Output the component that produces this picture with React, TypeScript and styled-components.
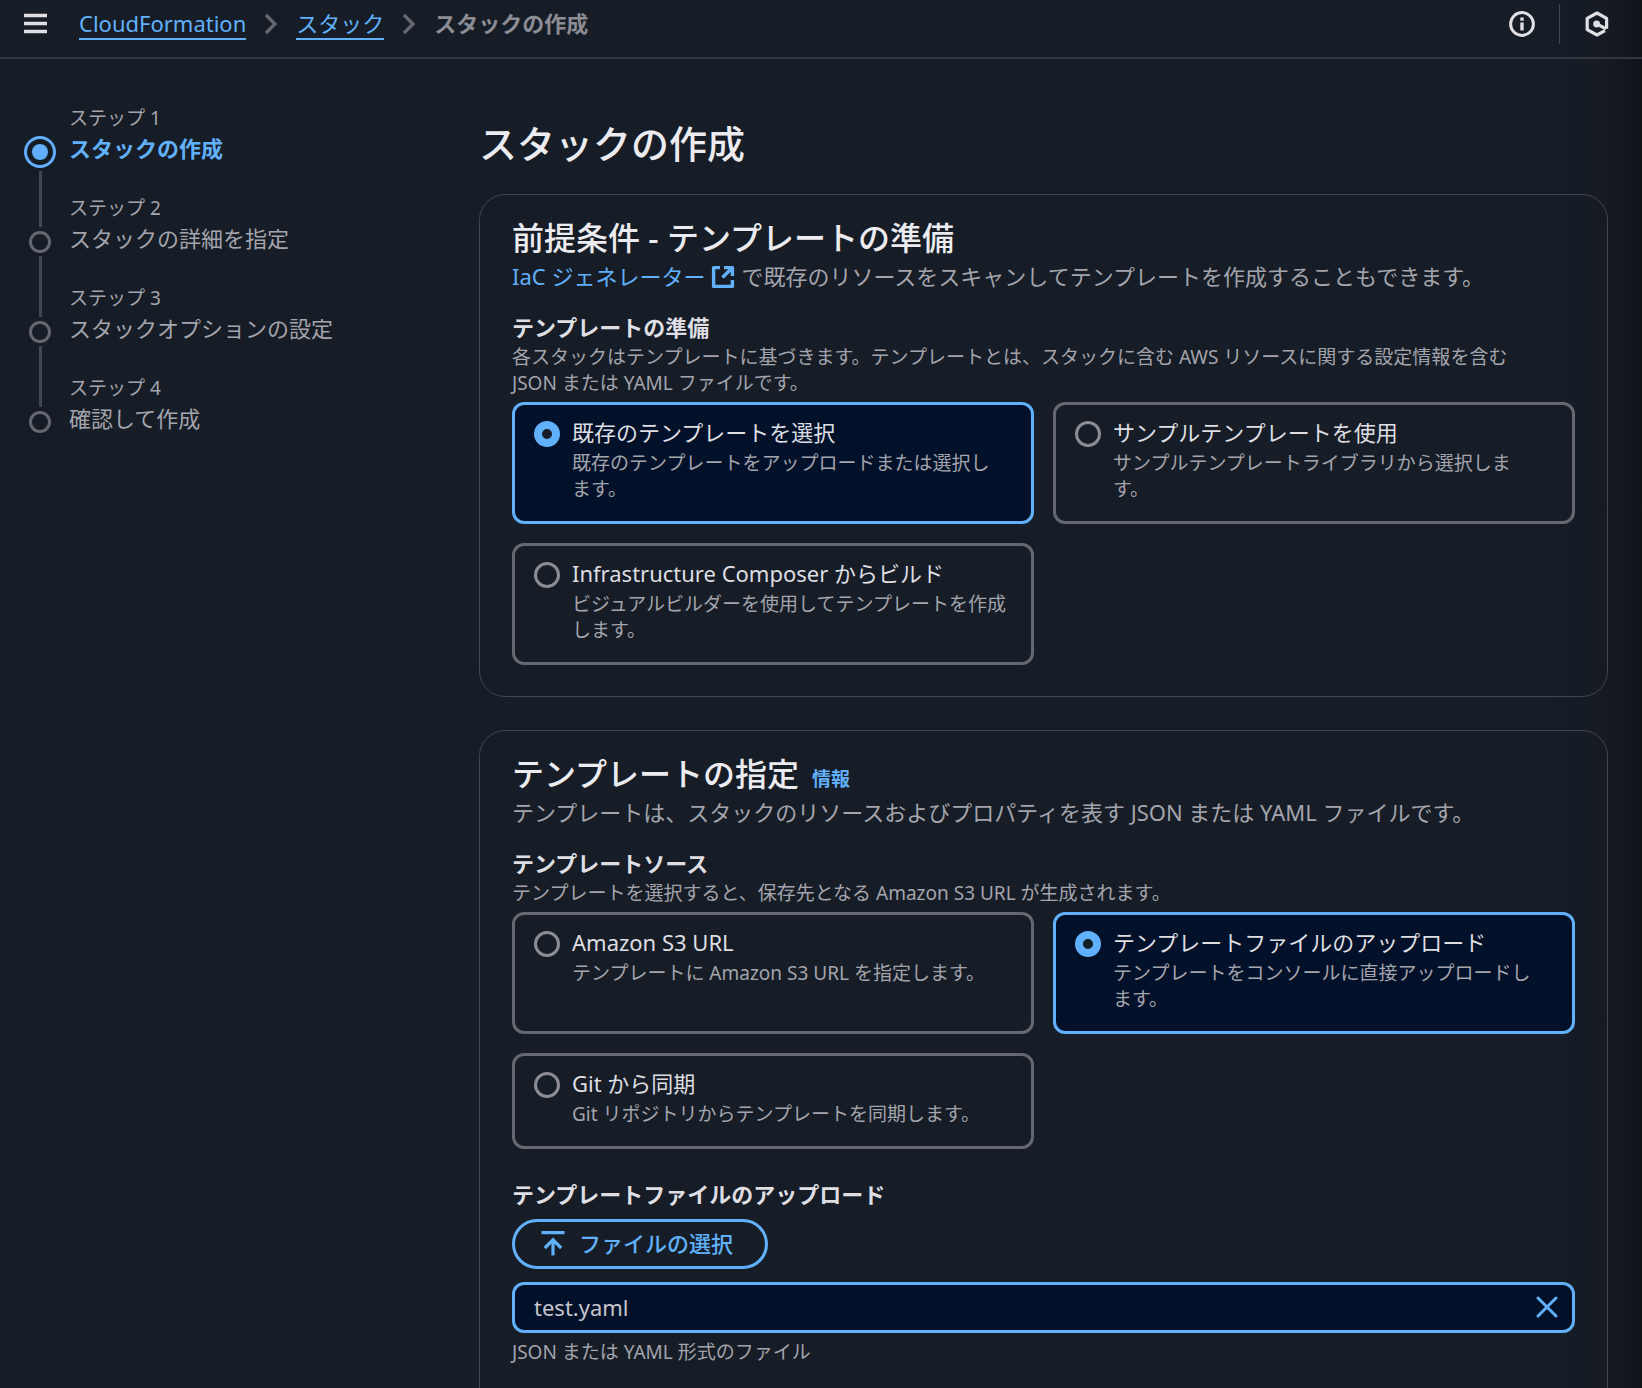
import React, { useState } from 'react';
import styled, { createGlobalStyle, css } from 'styled-components';

const color = {
  page: '#161d26',
  selected: '#001129',
  accent: '#61b0fc',
  heading: '#ebebf0',
  text: '#dedee3',
  muted: '#a4a4ad',
  faint: '#8c8c94',
  line: '#424650',
  control: '#656871',
};

const GlobalStyle = createGlobalStyle`
  *, *::before, *::after { box-sizing: border-box; }
  body {
    margin: 0;
    background: ${color.page};
    color: ${color.muted};
    font-family: 'Noto Sans', 'Noto Sans CJK JP', sans-serif;
    font-size: 22px;
    line-height: 32px;
  }
  button, input { font: inherit; color: inherit; }
  h1, h2, p, ol, fieldset, legend { margin: 0; padding: 0; border: 0; }
`;

const Shell = styled.div`
  height: 100vh;
  display: flex;
  flex-direction: column;
  background: linear-gradient(to left, #0f1217 0, #131820 20px, #161b24 44px, ${color.page} 90px);
`;

const TopBar = styled.header`
  flex: none;
  display: flex;
  align-items: center;
  justify-content: space-between;
  height: 59px;
  padding: 0 32px 10px 22px;
  border-bottom: 2px solid #32363f;
`;

const BarGroup = styled.div<{ $gap: number }>`
  display: flex;
  align-items: center;
  gap: ${(p) => p.$gap}px;
`;

const IconButton = styled.button`
  display: flex;
  padding: 0;
  border: 0;
  background: none;
  color: ${color.text};
  cursor: pointer;
`;

const Divider = styled.span`
  width: 1px;
  height: 40px;
  background: ${color.line};
`;

const Crumbs = styled.ol`
  display: flex;
  align-items: center;
  gap: 17px;
  list-style: none;

  li {
    display: flex;
    align-items: center;
    gap: 17px;
  }
`;

const crumb = css`
  display: block;
  line-height: 30px;
  border-bottom: 2px solid transparent;
`;

const CrumbLink = styled.a`
  ${crumb}
  color: ${color.accent};
  text-decoration: none;
  border-color: ${color.accent};
`;

const CurrentCrumb = styled.span`
  ${crumb}
  color: ${color.faint};
  font-weight: 700;
`;

const Scroller = styled.div`
  flex: 1;
  min-height: 0;
  overflow-y: auto;
  scrollbar-width: none;
  display: flex;
  align-items: flex-start;
`;

const StepNav = styled.nav`
  flex: none;
  width: 479px;
  padding: 47px 24px 0;

  ol { list-style: none; }
`;

const StepItem = styled.li`
  display: flex;
  gap: 13px;
  height: 90px;
`;

const Rail = styled.span`
  flex: none;
  width: 32px;
  display: flex;
  flex-direction: column;
  align-items: center;
`;

const Segment = styled.span<{ $grow?: boolean; $hidden?: boolean }>`
  width: 3px;
  background: ${(p) => (p.$hidden ? 'transparent' : color.line)};
  ${(p) => (p.$grow ? 'flex: 1;' : 'height: 31px;')}
`;

const Marker = styled.span<{ $active?: boolean }>`
  flex: none;
  width: ${(p) => (p.$active ? 32 : 22)}px;
  height: ${(p) => (p.$active ? 32 : 22)}px;
  margin: ${(p) => (p.$active ? '-1px 0 3px' : '4px 0 3px')};
  border: 3px solid ${(p) => (p.$active ? color.accent : color.control)};
  border-radius: 50%;
  ${(p) =>
    p.$active &&
    css`
      padding: 5px;
      background: ${color.accent} content-box;
    `}
`;

const StepText = styled.div<{ $active?: boolean }>`
  display: flex;
  flex-direction: column;
  gap: 2px;
  font-size: 19px;
  line-height: 24px;

  a {
    font-size: 22px;
    line-height: 32px;
    text-decoration: none;
    font-weight: ${(p) => (p.$active ? 700 : 400)};
    color: ${(p) => (p.$active ? color.accent : color.muted)};
  }
`;

const Main = styled.main`
  flex: 1;
  min-width: 0;
  padding: 60px 34px 64px 0;
  display: flex;
  flex-direction: column;
`;

const PageTitle = styled.h1`
  font-size: 38px;
  line-height: 48px;
  font-weight: 500;
  color: ${color.heading};
  margin-bottom: 27px;
`;

const Card = styled.section`
  padding: 24px 32px 31px;
  border: 1px solid ${color.line};
  border-radius: 26px;

  & + & {
    margin-top: 33px;
    padding-bottom: 80px;
  }
`;

const CardTitle = styled.h2`
  display: flex;
  align-items: baseline;
  gap: 13px;
  font-size: 32px;
  line-height: 38px;
  font-weight: 500;
  color: ${color.heading};
`;

const InfoLink = styled.a`
  font-size: 19px;
  line-height: 24px;
  font-weight: 700;
  color: ${color.accent};
  text-decoration: none;
`;

const CardText = styled.p`
  margin-top: 3px;
`;

const TextLink = styled.a`
  color: ${color.accent};
  text-decoration: none;

  svg {
    vertical-align: -4px;
    margin: 0 6px;
  }
`;

const Field = styled.fieldset`
  min-width: 0;
  margin-top: 19px;
`;

const labelText = css`
  display: block;
  font-weight: 700;
  color: ${color.text};
`;

const Legend = styled.legend`
  ${labelText}
`;

const UploadLabel = styled.label`
  ${labelText}
`;

const Hint = styled.p`
  margin-top: 1px;
  font-size: 19px;
  line-height: 26px;
  white-space: pre-line;
`;

const Tiles = styled.div`
  display: grid;
  grid-template-columns: 1fr 1fr;
  gap: 19px;
  margin-top: 6px;
`;

const Tile = styled.label`
  display: flex;
  gap: 12px;
  padding: 11px 13px 19px 19px;
  border: 3px solid ${color.control};
  border-radius: 12px;
  cursor: pointer;

  &:has(input:checked) {
    border-color: ${color.accent};
    background: ${color.selected};
  }
`;

const Radio = styled.input`
  appearance: none;
  flex: none;
  width: 26px;
  height: 26px;
  margin: 5px 0 0;
  border: 3px solid ${color.faint};
  border-radius: 50%;

  &:checked {
    border: 8px solid ${color.accent};
    background: ${color.page};
  }
`;

const TileBody = styled.span`
  display: block;
  min-width: 0;
`;

const TileTitle = styled.span`
  display: block;
  margin-bottom: 2px;
  color: ${color.text};
`;

const TileText = styled.span`
  display: block;
  font-size: 19px;
  line-height: 26px;
  white-space: pre-line;
`;

const UploadBlock = styled.div`
  margin-top: 29px;
`;

const UploadButton = styled.button`
  display: flex;
  align-items: center;
  gap: 13px;
  height: 50px;
  margin-top: 9px;
  padding: 0 32px 3px 25px;
  border: 3px solid ${color.accent};
  border-radius: 25px;
  background: none;
  color: ${color.accent};
  font-weight: 500;
  cursor: pointer;
`;

const FileRow = styled.div`
  display: flex;
  align-items: center;
  justify-content: space-between;
  height: 51px;
  margin: 13px 0 6px;
  padding: 0 13px 2px 19px;
  border: 3px solid ${color.accent};
  border-radius: 12px;
  background: ${color.selected};
  color: #c6c6cd;
`;

const RemoveButton = styled(IconButton)`
  color: ${color.accent};
`;

const MenuIcon = () => (
  <svg width="27" height="27" viewBox="0 0 27 27" stroke="currentColor" strokeWidth="3.6" aria-hidden="true">
    <path d="M2 5.5h23M2 13.5h23M2 21.5h23" />
  </svg>
);

const ChevronIcon = () => (
  <svg width="16" height="24" viewBox="0 0 16 24" fill="none" stroke={color.control} strokeWidth="3.2" aria-hidden="true">
    <path d="M3 3l9 9-9 9" />
  </svg>
);

const InfoIcon = () => (
  <svg width="26" height="26" viewBox="0 0 26 26" fill="none" stroke="currentColor" strokeWidth="3" aria-hidden="true">
    <circle cx="13" cy="13" r="11.4" />
    <path d="M13 11.5v8M13 6.5v3.2" strokeWidth="3.4" />
  </svg>
);

const AssistantIcon = () => (
  <svg width="26" height="28" viewBox="0 0 26 28" fill="none" stroke="currentColor" strokeWidth="3.2" strokeLinejoin="round" aria-hidden="true">
    <path d="M22.6 18.8V8.4L13 3 3.2 8.4v11.2L13 25l8-4.3" />
    <path d="M13 14l9 4.8" />
    <circle cx="12.6" cy="14" r="3.4" fill="currentColor" stroke="none" />
  </svg>
);

const ExternalIcon = () => (
  <svg width="24" height="24" viewBox="0 0 24 24" fill="none" stroke="currentColor" strokeWidth="3.4" strokeLinejoin="round" aria-hidden="true">
    <path d="M9 2.6H2.6v18.8h18.8V15" />
    <path d="M13 2.6h8.4V11M21 3L11.5 12.5" />
  </svg>
);

const UploadIcon = () => (
  <svg width="26" height="26" viewBox="0 0 26 26" fill="none" stroke="currentColor" strokeWidth="3.2" aria-hidden="true">
    <path d="M1.5 2.6h23M13 25.5V10M4.8 18l8.2-8.2 8.2 8.2" />
  </svg>
);

const CloseIcon = () => (
  <svg width="24" height="24" viewBox="0 0 24 24" stroke="currentColor" strokeWidth="3" strokeLinecap="round" aria-hidden="true">
    <path d="M3 3l18 18M21 3L3 21" />
  </svg>
);

type Option = { id: string; title: string; text: string };

const prepareOptions: Option[] = [
  { id: 'existing', title: '既存のテンプレートを選択', text: '既存のテンプレートをアップロードまたは選択し\nます。' },
  { id: 'sample', title: 'サンプルテンプレートを使用', text: 'サンプルテンプレートライブラリから選択しま\nす。' },
  { id: 'composer', title: 'Infrastructure Composer からビルド', text: 'ビジュアルビルダーを使用してテンプレートを作成\nします。' },
];

const sourceOptions: Option[] = [
  { id: 's3', title: 'Amazon S3 URL', text: 'テンプレートに Amazon S3 URL を指定します。' },
  { id: 'upload', title: 'テンプレートファイルのアップロード', text: 'テンプレートをコンソールに直接アップロードし\nます。' },
  { id: 'git', title: 'Git から同期', text: 'Git リポジトリからテンプレートを同期します。' },
];

const prepareHint =
  '各スタックはテンプレートに基づきます。テンプレートとは、スタックに含む AWS リソースに関する設定情報を含む\nJSON または YAML ファイルです。';

const steps = ['スタックの作成', 'スタックの詳細を指定', 'スタックオプションの設定', '確認して作成'];

function TileGroup({ name, options, initial }: { name: string; options: Option[]; initial: string }) {
  const [value, setValue] = useState(initial);
  return (
    <Tiles>
      {options.map((o) => (
        <Tile key={o.id} htmlFor={`${name}-${o.id}`}>
          <Radio
            type="radio"
            id={`${name}-${o.id}`}
            name={name}
            checked={value === o.id}
            onChange={() => setValue(o.id)}
          />
          <TileBody>
            <TileTitle>{o.title}</TileTitle>
            <TileText>{o.text}</TileText>
          </TileBody>
        </Tile>
      ))}
    </Tiles>
  );
}

export default function App() {
  return (
    <Shell lang="ja">
      <GlobalStyle />
      <TopBar>
        <BarGroup $gap={30}>
          <IconButton type="button" aria-label="メニュー">
            <MenuIcon />
          </IconButton>
          <nav aria-label="パンくずリスト">
            <Crumbs>
              <li>
                <CrumbLink href="#home">CloudFormation</CrumbLink>
                <ChevronIcon />
              </li>
              <li>
                <CrumbLink href="#stacks">スタック</CrumbLink>
                <ChevronIcon />
              </li>
              <li>
                <CurrentCrumb aria-current="page">スタックの作成</CurrentCrumb>
              </li>
            </Crumbs>
          </nav>
        </BarGroup>
        <BarGroup $gap={24}>
          <IconButton type="button" aria-label="情報">
            <InfoIcon />
          </IconButton>
          <Divider />
          <IconButton type="button" aria-label="アシスタント">
            <AssistantIcon />
          </IconButton>
        </BarGroup>
      </TopBar>
      <Scroller>
        <StepNav aria-label="ステップ">
          <ol>
            {steps.map((title, i) => (
              <StepItem key={title}>
                <Rail>
                  <Segment $hidden={i === 0} />
                  <Marker $active={i === 0} />
                  <Segment $grow $hidden={i === steps.length - 1} />
                </Rail>
                <StepText $active={i === 0}>
                  <span>ステップ {i + 1}</span>
                  <a href={`#step-${i + 1}`}>{title}</a>
                </StepText>
              </StepItem>
            ))}
          </ol>
        </StepNav>
        <Main>
          <PageTitle>スタックの作成</PageTitle>
          <Card>
            <CardTitle>前提条件 - テンプレートの準備</CardTitle>
            <CardText>
              <TextLink href="#iac">
                IaC ジェネレーター
                <ExternalIcon />
              </TextLink>
              で既存のリソースをスキャンしてテンプレートを作成することもできます。
            </CardText>
            <Field>
              <Legend>テンプレートの準備</Legend>
              <Hint>{prepareHint}</Hint>
              <TileGroup name="prepare" options={prepareOptions} initial="existing" />
            </Field>
          </Card>
          <Card>
            <CardTitle>
              テンプレートの指定 <InfoLink href="#info">情報</InfoLink>
            </CardTitle>
            <CardText>テンプレートは、スタックのリソースおよびプロパティを表す JSON または YAML ファイルです。</CardText>
            <Field>
              <Legend>テンプレートソース</Legend>
              <Hint>テンプレートを選択すると、保存先となる Amazon S3 URL が生成されます。</Hint>
              <TileGroup name="source" options={sourceOptions} initial="upload" />
            </Field>
            <UploadBlock>
              <UploadLabel htmlFor="choose-file">テンプレートファイルのアップロード</UploadLabel>
              <UploadButton id="choose-file" type="button">
                <UploadIcon />
                ファイルの選択
              </UploadButton>
              <FileRow>
                <span>test.yaml</span>
                <RemoveButton type="button" aria-label="ファイルを削除">
                  <CloseIcon />
                </RemoveButton>
              </FileRow>
              <Hint>JSON または YAML 形式のファイル</Hint>
            </UploadBlock>
          </Card>
        </Main>
      </Scroller>
    </Shell>
  );
}
